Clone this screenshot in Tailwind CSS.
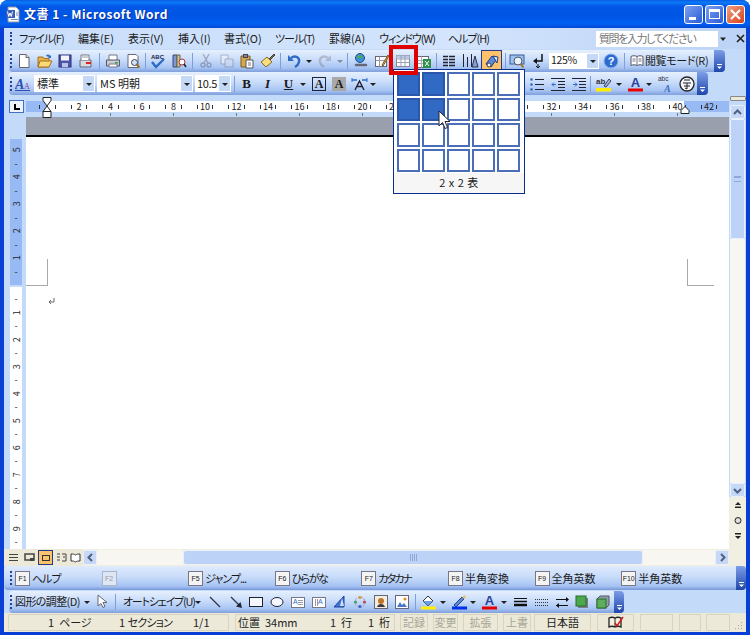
<!DOCTYPE html>
<html lang="ja">
<head>
<meta charset="utf-8">
<script src="https://cdn.jsdelivr.net/npm/@tailwindcss/browser@4"></script>
<title>Word</title>
</head>
<body class="bg-white">
<div class="relative w-[750px] h-[635px] overflow-hidden rounded-t-[8px] flex flex-col bg-[#0a3fd6] font-['Noto_Sans_CJK_JP','Liberation_Sans',sans-serif] [font-feature-settings:'palt'] text-[11px] leading-none text-[#1a1a1a]">

  <!-- title bar -->
  <div class="h-[28px] shrink-0 flex items-center pl-[5px] pr-[5px] bg-[linear-gradient(180deg,#0a5ae6_0%,#0b7bf5_8%,#0358e8_22%,#0054e3_55%,#0160f2_85%,#0348d2_100%)]">
    <svg class="w-[17px] h-[17px] shrink-0" viewBox="0 0 17 17"><path d="M3 1h8l3 3v12H3z" fill="#fff" stroke="#8a93a8"/><rect x="1" y="4" width="9" height="8" fill="#3a5fb8"/><path d="M2.5 5.5l1.2 5 1.3-3.5 1.3 3.5 1.2-5" stroke="#fff" fill="none"/><path d="M11 7h2M11 9h2M6 13.500h7" stroke="#7a88a8"/></svg>
    <span class="ml-[2px] text-white font-bold text-[12px] tracking-[0.5px] whitespace-nowrap [text-shadow:1px_1px_0_#0a2f9a]">文書&nbsp;1&nbsp;-&nbsp;Microsoft&nbsp;Word</span>
    <div class="ml-auto flex gap-[2px]">
      <div class="w-[19px] h-[19px] rounded-[3px] border border-white bg-[linear-gradient(135deg,#7da2f0,#2a5bd8)] flex items-end pl-[4px] pb-[3px]"><div class="w-[7px] h-[3px] bg-white"></div></div>
      <div class="w-[19px] h-[19px] rounded-[3px] border border-white bg-[linear-gradient(135deg,#7da2f0,#2a5bd8)] flex items-center justify-center"><div class="w-[11px] h-[10px] border border-white border-t-[3px]"></div></div>
      <div class="w-[19px] h-[19px] rounded-[3px] border border-white bg-[linear-gradient(135deg,#f0a080,#d8401a)] flex items-center justify-center">
        <svg class="w-[13px] h-[13px]" viewBox="0 0 13 13"><path d="M2 2l9 9M11 2l-9 9" stroke="#fff" stroke-width="2.200"/></svg>
      </div>
    </div>
  </div>

  <div class="flex-1 min-h-0 mx-[4px] mb-[3px] flex flex-col bg-[#c4daf9]">

    <!-- menu bar -->
    <div class="h-[21px] shrink-0 flex items-center pl-[6px] whitespace-nowrap bg-[linear-gradient(90deg,#c9defb,#d3e4fc_60%,#bcd3f7)]">
      <div class="w-[2px] h-[13px] mr-[7px] border-l-2 border-dotted border-[#27419a]"></div>
      <span class="w-[59px] tracking-[-1px]">ファイル(F)</span>
      <span class="w-[50px]">編集(E)</span>
      <span class="w-[50px]">表示(V)</span>
      <span class="w-[46px]">挿入(I)</span>
      <span class="w-[51px]">書式(O)</span>
      <span class="w-[54px] tracking-[-1px]">ツール(T)</span>
      <span class="w-[50px]">罫線(A)</span>
      <span class="w-[69px] tracking-[-1px]">ウィンドウ(W)</span>
      <span class="w-[148px] tracking-[-1px]">ヘルプ(H)</span>
      <div class="w-[122px] h-[16px] bg-white flex items-center pl-[3px] text-[#777] tracking-[-1.400px]">質問を入力してください</div>
      <svg class="ml-[1px] w-[8px] h-[8px]" viewBox="0 0 8 8"><path d="M1 2.500h6L4 6z" fill="#222"/></svg>
      <svg class="ml-[9px] w-[9px] h-[9px]" viewBox="0 0 9 9"><path d="M1 1l7 7M8 1l-7 7" stroke="#222" stroke-width="1.600"/></svg>
    </div>

    <!-- standard toolbar -->
    <div class="h-[23px] shrink-0 flex items-center">
      <div class="relative ml-[5px] w-[716px] h-[22px] rounded-[4px] flex items-center pl-[1px] whitespace-nowrap bg-[linear-gradient(180deg,#e6f0fe,#c8dcfa_45%,#a8c5f3_80%,#7f9fdc)]">
        <div class="w-[2px] h-[14px] mr-[2px] border-l-2 border-dotted border-[#27419a]"></div>
        <!-- new --><svg class="w-[16px] h-[16px] mx-[2px]" viewBox="0 0 16 16"><path d="M3.500 1.500h6.500l3 3v10H3.500z" fill="#fff" stroke="#666"/><path d="M10 1.500v3h3" fill="#ddd" stroke="#666"/></svg>
        <!-- open --><svg class="w-[16px] h-[16px] mx-[2.500px]" viewBox="0 0 16 16"><path d="M1 4h5l1 1.500h5V14H1z" fill="#e8b24a" stroke="#a5701c"/><path d="M3 8h12l-3 6H1z" fill="#fbd87a" stroke="#a5701c"/><path d="M9 3c1-2 3-2 4 0l1-1v3h-3l1-1" fill="#2e6bc8"/></svg>
        <!-- save --><svg class="w-[16px] h-[16px] mx-[2px]" viewBox="0 0 16 16"><rect x="2" y="2" width="12" height="12" fill="#4d55a8" stroke="#2a2f78"/><rect x="4" y="2.500" width="8" height="5" fill="#f4f4fa"/><rect x="5" y="10" width="6" height="4" fill="#bcc2e8"/></svg>
        <!-- perm --><svg class="w-[16px] h-[16px] mx-[2px]" viewBox="0 0 16 16"><path d="M3 7h11v7H3z" fill="#d7d9de" stroke="#667"/><path d="M4 7V2h8v5" fill="#fff" stroke="#778"/><rect x="9" y="9" width="5" height="2" fill="#d22"/><path d="M5 4h6" stroke="#99a"/></svg>
        <div class="w-[1px] h-[16px] ml-[4px] mr-[3px] bg-[#7f9fdc]"></div>
        <!-- print --><svg class="w-[16px] h-[16px] mx-[2px]" viewBox="0 0 16 16"><path d="M4 7V2h8v5" fill="#fff" stroke="#778"/><path d="M1.500 7h13v6h-13z" fill="#c9ccd3" stroke="#556"/><rect x="10" y="9" width="3" height="1.500" fill="#2aa84a"/><path d="M4 11h8v3H4z" fill="#fff" stroke="#778"/></svg>
        <!-- preview --><svg class="w-[16px] h-[16px] mx-[2px]" viewBox="0 0 16 16"><path d="M3 1.500h8l2 2v11H3z" fill="#fff" stroke="#667"/><circle cx="9.500" cy="9.500" r="3" fill="#cfe3fb" stroke="#445"/><path d="M11.500 11.500l3 3" stroke="#a06b20" stroke-width="1.800"/></svg>
        <div class="w-[1px] h-[16px] ml-[2px] mr-[2px] bg-[#7f9fdc]"></div>
        <!-- spell --><svg class="w-[18px] h-[16px] mx-[1px]" viewBox="0 0 18 16"><text x="2" y="6" font-size="6" font-weight="700" fill="#224" font-family="Liberation Sans">ABC</text><path d="M3 9l4 5L15 6" fill="none" stroke="#2e6bc8" stroke-width="2.400"/></svg>
        <!-- research --><svg class="w-[16px] h-[16px] mx-[3px]" viewBox="0 0 16 16"><path d="M2 2h4v12H2z" fill="#7c9ad8" stroke="#446"/><path d="M6 2h3v12H6z" fill="#d9c48c" stroke="#665"/><circle cx="11" cy="9" r="3" fill="#fff" stroke="#a33"/><path d="M13 11l2 3" stroke="#222" stroke-width="1.500"/></svg>
        <div class="w-[1px] h-[16px] mx-[2px] bg-[#7f9fdc]"></div>
        <!-- cut --><svg class="w-[16px] h-[16px] mx-[2.500px] opacity-40" viewBox="0 0 16 16"><path d="M5 1l5 9M11 1L6 10" stroke="#556" stroke-width="1.400"/><circle cx="5" cy="12" r="2" fill="none" stroke="#556" stroke-width="1.400"/><circle cx="11" cy="12" r="2" fill="none" stroke="#556" stroke-width="1.400"/></svg>
        <!-- copy --><svg class="w-[16px] h-[16px] mx-[2.500px] opacity-40" viewBox="0 0 16 16"><path d="M2 2h7v9H2z" fill="#fff" stroke="#667"/><path d="M6 6h8v8H6z" fill="#dde" stroke="#667"/></svg>
        <!-- paste --><svg class="w-[16px] h-[16px] mx-[2px]" viewBox="0 0 16 16"><path d="M2 3h9v11H2z" fill="#d9a64a" stroke="#7a5a20"/><rect x="4.500" y="1.500" width="4" height="3" fill="#889" stroke="#445"/><path d="M7 7h7v8H7z" fill="#fff" stroke="#556"/><path d="M9 10h3M9 12h3" stroke="#778"/></svg>
        <!-- painter --><svg class="w-[16px] h-[16px] mx-[2.500px]" viewBox="0 0 16 16"><path d="M1 9l6-5 5 5-6 5z" fill="#f7dc80" stroke="#8a6a20"/><path d="M9 6l5-5 1 1-5 5" fill="#7a6a5a" stroke="#443"/></svg>
        <div class="w-[1px] h-[16px] ml-[2px] mr-[4px] bg-[#7f9fdc]"></div>
        <!-- undo --><svg class="w-[16px] h-[16px] mx-[2px]" viewBox="0 0 16 16"><path d="M4 5c4-3 9-1 8 4-.500 2-2 4-4 5" fill="none" stroke="#2e6bc8" stroke-width="2.400"/><path d="M1 2v6h6z" fill="#2e6bc8"/></svg>
        <svg class="w-[8px] h-[8px]" viewBox="0 0 8 8"><path d="M1 3h6L4 6z" fill="#222"/></svg>
        <!-- redo --><svg class="w-[16px] h-[16px] ml-[3px] mr-[4px] opacity-35" viewBox="0 0 16 16"><path d="M12 5c-4-3-9-1-8 4 .500 2 2 4 4 5" fill="none" stroke="#778" stroke-width="2.400"/><path d="M15 2v6H9z" fill="#778"/></svg>
        <svg class="w-[8px] h-[8px] opacity-40" viewBox="0 0 8 8"><path d="M1 3h6L4 6z" fill="#222"/></svg>
        <div class="w-[1px] h-[16px] mx-[3px] bg-[#7f9fdc]"></div>
        <!-- link --><svg class="w-[16px] h-[16px] mx-[2px]" viewBox="0 0 16 16"><circle cx="7" cy="5" r="4.500" fill="#3f8fd8" stroke="#26508a"/><path d="M4 4c2-2 3 1 5 0" stroke="#4cae4c" stroke-width="2" fill="none"/><path d="M3 12h5M9 12h4" stroke="#667" stroke-width="2.500" stroke-linecap="round"/></svg>
        <!-- tables & borders --><svg class="w-[16px] h-[16px] mx-[2.500px]" viewBox="0 0 16 16"><rect x="1.500" y="3.500" width="11" height="10" fill="#fff" stroke="#667"/><path d="M5.500 3.500v10M1.500 7.500h11" stroke="#99a"/><path d="M8 12L14 2l1 1-6 10z" fill="#e8b24a" stroke="#7a5a20"/></svg>
        <!-- table --><div class="w-[21px] h-[22px] flex items-center justify-center"><svg class="w-[14px] h-[14px]" viewBox="0 0 14 14"><rect x=".5" y="1.500" width="13" height="11" fill="#fff" stroke="#889"/><rect x=".5" y="1.500" width="13" height="3" fill="#b7c9e6"/><path d="M5 1.500v11M9 1.500v11M.5 5h13M.5 8.500h13" stroke="#99a3b5"/></svg></div>
        <!-- excel --><svg class="w-[16px] h-[16px] mx-[2.500px]" viewBox="0 0 16 16"><rect x="1.500" y="3.500" width="11" height="11" fill="#fff" stroke="#667"/><path d="M1.500 7.500h11M1.500 10.500h11M5.500 3.500v11" stroke="#aab"/><rect x="7" y="6" width="8" height="9" fill="#2e8f4c"/><path d="M9 8l4 5M13 8l-4 5" stroke="#fff"/></svg>
        <div class="w-[1px] h-[16px] mx-[2px] bg-[#7f9fdc]"></div>
        <!-- columns --><svg class="w-[16px] h-[16px] mx-[2px]" viewBox="0 0 16 16"><path d="M2 3.500h12M2 6.500h12M2 9.500h12M2 12.500h12" stroke="#223" stroke-width="1.400"/><path d="M7.500 2v12" stroke="#c8dcfa" stroke-width="1"/></svg>
        <!-- drawing --><svg class="w-[18px] h-[16px] mx-[2px]" viewBox="0 0 18 16"><path d="M2.500 14V1M6.500 14V4M10.500 14V1" stroke="#223" stroke-width="1"/><path d="M14 3l-3 11h6z" fill="#7fa0dc" stroke="#334"/></svg>
        <!-- docmap active --><div class="w-[21px] h-[22px] border border-[#2a3c88] bg-[#fbc26b] flex items-center justify-center"><svg class="w-[16px] h-[16px]" viewBox="0 0 16 16"><path d="M2 11l6-8 4 4-5 7z" fill="#5a8ad8" stroke="#223a80"/><path d="M9 3l5 1-1 6z" fill="#d9e6fb" stroke="#223a80"/><circle cx="5" cy="12" r="2" fill="#f4f4f4" stroke="#444"/></svg></div>
        <div class="w-[1px] h-[16px] ml-[3px] mr-[1px] bg-[#7f9fdc]"></div>
        <!-- magnifier --><svg class="w-[17px] h-[16px] mx-[2px]" viewBox="0 0 17 16"><rect x="1" y="2" width="14" height="9" fill="#9cc2ee" stroke="#3b5c9a"/><circle cx="9" cy="8" r="4" fill="#e8f2fd" stroke="#556"/><path d="M11.500 11l3 3.500" stroke="#a06b20" stroke-width="1.800"/></svg>
        <!-- para --><svg class="w-[16px] h-[16px] mx-[2px]" viewBox="0 0 16 16"><path d="M12 1v7H6" fill="none" stroke="#111" stroke-width="1.500"/><path d="M7 5L3 8l4 3z" fill="#111"/><path d="M8 11v3M6 13l2 2 2-2" stroke="#111" fill="none"/></svg>
        <!-- zoom --><div class="ml-[1px] w-[50px] h-[16px] bg-white flex items-center justify-between pl-[2px] text-[#222]"><span class="text-[10.500px] tracking-[-0.3px]">125%</span><div class="w-[11px] h-[14px] mr-[1px] bg-[#c5d8f6] flex items-center justify-center"><svg class="w-[8px] h-[8px]" viewBox="0 0 8 8"><path d="M1 3h6L4 6z" fill="#222"/></svg></div></div>
        <!-- help --><svg class="w-[16px] h-[16px] ml-[4px] mr-[2px]" viewBox="0 0 16 16"><circle cx="8" cy="8" r="7" fill="#2e6bd0" stroke="#8fb0ea"/><text x="8" y="12" text-anchor="middle" font-size="11" font-weight="700" fill="#fff" font-family="Liberation Sans">?</text></svg>
        <div class="w-[1px] h-[16px] ml-[3px] mr-[5px] bg-[#7f9fdc]"></div>
        <!-- read --><svg class="w-[14px] h-[12px]" viewBox="0 0 14 12"><path d="M1 1.500c2-1 4-1 6 0 2-1 4-1 6 0v9c-2-1-4-1-6 0-2-1-4-1-6 0z" fill="#fff" stroke="#556"/><path d="M7 1.500v9M2.500 4h3M2.500 6h3M8.500 4h3M8.500 6h3" stroke="#778"/></svg>
        <span class="ml-[1px] tracking-[-0.400px]">閲覧モード(R)</span>
        <div class="absolute right-0 top-0 w-[11px] h-[22px] rounded-r-[4px] bg-[linear-gradient(180deg,#7d9de6,#1f47ab)] flex items-end justify-center pb-[2px]"><svg class="w-[7px] h-[7px]" viewBox="0 0 7 7"><path d="M1 1h5v1H1zM1 3.500h5L3.500 6z" fill="#fff"/></svg></div>
      </div>
    </div>

    <!-- formatting toolbar -->
    <div class="h-[23px] shrink-0 flex items-center">
      <div class="relative ml-[5px] w-[699px] h-[23px] rounded-[4px] flex items-center pl-[1px] bg-[linear-gradient(180deg,#e6f0fe,#c8dcfa_45%,#a8c5f3_80%,#7f9fdc)]">
        <div class="w-[2px] h-[14px] mr-[2px] border-l-2 border-dotted border-[#27419a]"></div>
        <svg class="w-[16px] h-[16px] ml-[1px]" viewBox="0 0 16 16"><text x="0" y="13" font-size="14" font-style="italic" font-weight="700" fill="#2b4fb0" font-family="Liberation Serif">A</text><text x="9" y="13" font-size="8" fill="#8a3aa8" font-family="Liberation Serif">A</text><path d="M0 14.500h15" stroke="#2b4fb0"/></svg>
        <div class="ml-[3px] w-[61px] h-[17px] bg-white flex items-center justify-between pl-[3px]"><span>標準</span><div class="w-[11px] h-[15px] mr-[1px] bg-[#c5d8f6] flex items-center justify-center"><svg class="w-[8px] h-[8px]" viewBox="0 0 8 8"><path d="M1 3h6L4 6z" fill="#222"/></svg></div></div>
        <div class="ml-[2px] w-[96px] h-[17px] bg-white flex items-center justify-between pl-[3px]"><span>MS&nbsp;明朝</span><div class="w-[11px] h-[15px] mr-[1px] bg-[#c5d8f6] flex items-center justify-center"><svg class="w-[8px] h-[8px]" viewBox="0 0 8 8"><path d="M1 3h6L4 6z" fill="#222"/></svg></div></div>
        <div class="ml-[2px] w-[36px] h-[17px] bg-white flex items-center justify-between pl-[2px]"><span class="tracking-[-0.3px]">10.5</span><div class="w-[11px] h-[15px] mr-[1px] bg-[#c5d8f6] flex items-center justify-center"><svg class="w-[8px] h-[8px]" viewBox="0 0 8 8"><path d="M1 3h6L4 6z" fill="#222"/></svg></div></div>
        <div class="w-[1px] h-[16px] ml-[3px] mr-[1px] bg-[#7f9fdc]"></div>
        <span class="w-[21px] text-center font-['Liberation_Serif'] font-bold text-[13px]">B</span>
        <span class="w-[21px] text-center font-['Liberation_Serif'] font-bold italic text-[13px]">I</span>
        <span class="w-[21px] text-center font-['Liberation_Serif'] font-bold underline text-[13px]">U</span>
        <svg class="w-[8px] h-[8px] mr-[5px]" viewBox="0 0 8 8"><path d="M1 3h6L4 6z" fill="#222"/></svg>
        <span class="w-[14px] h-[14px] border border-[#223] text-center font-['Liberation_Serif'] font-bold text-[12px] leading-[12px] mr-[6px]">A</span>
        <span class="w-[14px] h-[14px] bg-[#a9a9a9] text-center font-['Liberation_Serif'] font-bold text-[12px] leading-[14px] mr-[5px]">A</span>
        <svg class="w-[17px] h-[15px]" viewBox="0 0 17 15"><path d="M4 14l4.500-9L13 14M6 10.500h5" fill="none" stroke="#223" stroke-width="1.400"/><path d="M1 4h5M11 4h5" stroke="#2e6bc8" stroke-width="1.500"/><path d="M1 2v4M16 2v4" stroke="#2e6bc8"/></svg>
        <svg class="w-[8px] h-[8px] ml-[1px]" viewBox="0 0 8 8"><path d="M1 3h6L4 6z" fill="#222"/></svg>
        <!-- bullets and rest on the right of the grid -->
        <svg class="ml-[152px] w-[16px] h-[16px]" viewBox="0 0 16 16"><path d="M6 3.500h9M6 8.500h9M6 13.500h9" stroke="#223"/><circle cx="2.500" cy="3.500" r="1.300" fill="#2e6bc8"/><circle cx="2.500" cy="8.500" r="1.300" fill="#2e6bc8"/><circle cx="2.500" cy="13.500" r="1.300" fill="#2e6bc8"/></svg>
        <svg class="ml-[5px] w-[16px] h-[16px]" viewBox="0 0 16 16"><path d="M1 2.500h14M8 5.500h7M8 8.500h7M8 11.500h7M1 14.500h14" stroke="#223"/><path d="M6 8.500H2M4 6.500l-2 2 2 2" stroke="#2e6bc8" fill="none"/></svg>
        <svg class="ml-[5px] w-[16px] h-[16px]" viewBox="0 0 16 16"><path d="M1 2.500h14M8 5.500h7M8 8.500h7M8 11.500h7M1 14.500h14" stroke="#223"/><path d="M2 8.500h4M4 6.500l2 2-2 2" stroke="#2e6bc8" fill="none"/></svg>
        <div class="w-[1px] h-[16px] mx-[3px] bg-[#7f9fdc]"></div>
        <svg class="ml-[2px] w-[16px] h-[16px]" viewBox="0 0 16 16"><text x="0" y="8" font-size="8" font-weight="700" fill="#334" font-family="Liberation Sans">ab</text><path d="M8 10l5-7 2 2-5 6z" fill="#9fb3d8" stroke="#445"/><rect x="0" y="12" width="15" height="3.500" fill="#ffee00"/></svg>
        <svg class="ml-[3px] w-[8px] h-[8px]" viewBox="0 0 8 8"><path d="M1 3h6L4 6z" fill="#222"/></svg>
        <svg class="ml-[4.500px] w-[15px] h-[16px]" viewBox="0 0 15 16"><text x="7.500" y="11" text-anchor="middle" font-size="13" font-weight="700" fill="#2b3f9c" font-family="Liberation Sans">A</text><rect x="0" y="12.500" width="15" height="3" fill="#e80000"/></svg>
        <svg class="ml-[2.500px] w-[8px] h-[8px]" viewBox="0 0 8 8"><path d="M1 3h6L4 6z" fill="#222"/></svg>
        <svg class="ml-[4.500px] w-[15px] h-[16px]" viewBox="0 0 15 16"><text x="0" y="5" font-size="6.500" fill="#334" font-family="Liberation Sans">abc</text><text x="6" y="16" font-size="10" font-style="italic" font-weight="700" fill="#3f6fc8" font-family="Liberation Serif">A</text></svg>
        <svg class="ml-[6.500px] w-[16px] h-[16px]" viewBox="0 0 16 16"><circle cx="8" cy="8" r="7" fill="#f3f6fc" stroke="#222" stroke-width="1.300"/><path d="M5 4h6M4 7h8M8 7v6l-2-1M5 10h6" stroke="#222" fill="none"/></svg>
        <div class="absolute right-0 top-0 w-[11px] h-[23px] rounded-r-[4px] bg-[linear-gradient(180deg,#7d9de6,#1f47ab)] flex items-end justify-center pb-[2px]"><svg class="w-[7px] h-[7px]" viewBox="0 0 7 7"><path d="M1 1h5v1H1zM1 3.500h5L3.500 6z" fill="#fff"/></svg></div>
      </div>
    </div>

    <!-- workspace -->
    <div class="flex-1 min-h-0 flex flex-col">
      <div class="h-[454px] shrink-0 flex">
        <!-- left column: tab button + vertical ruler -->
        <div class="w-[22px] shrink-0 flex flex-col items-center pl-[2px]">
          <div class="mt-[5px] w-[15px] h-[13px] bg-[#eef3fc] border border-[#4470c4] flex items-center justify-center"><div class="w-[6px] h-[6px] ml-[1px] border-l-2 border-b-2 border-black"></div></div>
          <div class="mt-[26px] w-[12px] h-[146px] bg-[#97b9f4] pt-[4px] flex flex-col items-center text-[9px] text-[#222]">
            <span class="h-[13.500px] flex items-center -rotate-90">5</span><span class="h-[13.500px] flex items-center">-</span>
            <span class="h-[13.500px] flex items-center -rotate-90">4</span><span class="h-[13.500px] flex items-center">-</span>
            <span class="h-[13.500px] flex items-center -rotate-90">3</span><span class="h-[13.500px] flex items-center">-</span>
            <span class="h-[13.500px] flex items-center -rotate-90">2</span><span class="h-[13.500px] flex items-center">-</span>
            <span class="h-[13.500px] flex items-center -rotate-90">1</span><span class="h-[13.500px] flex items-center">-</span>
          </div>
          <div class="mt-[2px] w-[12px] h-[262px] bg-white pt-[5px] flex flex-col items-center text-[9px] text-[#222]">
            <span class="h-[13.500px] flex items-center">-</span><span class="h-[13.500px] flex items-center -rotate-90">1</span>
            <span class="h-[13.500px] flex items-center">-</span><span class="h-[13.500px] flex items-center -rotate-90">2</span>
            <span class="h-[13.500px] flex items-center">-</span><span class="h-[13.500px] flex items-center -rotate-90">3</span>
            <span class="h-[13.500px] flex items-center">-</span><span class="h-[13.500px] flex items-center -rotate-90">4</span>
            <span class="h-[13.500px] flex items-center">-</span><span class="h-[13.500px] flex items-center -rotate-90">5</span>
            <span class="h-[13.500px] flex items-center">-</span><span class="h-[13.500px] flex items-center -rotate-90">6</span>
            <span class="h-[13.500px] flex items-center">-</span><span class="h-[13.500px] flex items-center -rotate-90">7</span>
            <span class="h-[13.500px] flex items-center">-</span><span class="h-[13.500px] flex items-center -rotate-90">8</span>
            <span class="h-[13.500px] flex items-center">-</span><span class="h-[13.500px] flex items-center -rotate-90">9</span>
            <span class="h-[13.500px] flex items-center">-</span>
          </div>
        </div>

        <!-- center -->
        <div class="w-[703px] shrink-0 flex flex-col relative">
          <!-- ruler -->
          <div class="h-[22px] shrink-0 pt-[6px]">
            <div class="relative h-[11px] flex bg-[linear-gradient(90deg,#97b9f4_0,#97b9f4_21px,#fff_21px,#fff_658px,#97b9f4_658px)]">
              <div class="pl-[5.750px] flex text-[9px] text-[#222]">
                <div class="w-[31.500px] flex items-center justify-between px-[7.500px]"><i class="w-[1px] h-[4px] bg-[#333]"></i><i class="w-[1px] h-[4px] bg-[#333]"></i></div>
                <div class="w-[31.500px] flex items-center justify-between px-[7.500px]"><i class="w-[1px] h-[4px] bg-[#333]"></i><span>2</span><i class="w-[1px] h-[4px] bg-[#333]"></i></div>
                <div class="w-[31.500px] flex items-center justify-between px-[7.500px]"><i class="w-[1px] h-[4px] bg-[#333]"></i><span>4</span><i class="w-[1px] h-[4px] bg-[#333]"></i></div>
                <div class="w-[31.500px] flex items-center justify-between px-[7.500px]"><i class="w-[1px] h-[4px] bg-[#333]"></i><span>6</span><i class="w-[1px] h-[4px] bg-[#333]"></i></div>
                <div class="w-[31.500px] flex items-center justify-between px-[7.500px]"><i class="w-[1px] h-[4px] bg-[#333]"></i><span>8</span><i class="w-[1px] h-[4px] bg-[#333]"></i></div>
                <div class="w-[31.500px] flex items-center justify-between px-[7.500px]"><i class="w-[1px] h-[4px] bg-[#333]"></i><span>10</span><i class="w-[1px] h-[4px] bg-[#333]"></i></div>
                <div class="w-[31.500px] flex items-center justify-between px-[7.500px]"><i class="w-[1px] h-[4px] bg-[#333]"></i><span>12</span><i class="w-[1px] h-[4px] bg-[#333]"></i></div>
                <div class="w-[31.500px] flex items-center justify-between px-[7.500px]"><i class="w-[1px] h-[4px] bg-[#333]"></i><span>14</span><i class="w-[1px] h-[4px] bg-[#333]"></i></div>
                <div class="w-[31.500px] flex items-center justify-between px-[7.500px]"><i class="w-[1px] h-[4px] bg-[#333]"></i><span>16</span><i class="w-[1px] h-[4px] bg-[#333]"></i></div>
                <div class="w-[31.500px] flex items-center justify-between px-[7.500px]"><i class="w-[1px] h-[4px] bg-[#333]"></i><span>18</span><i class="w-[1px] h-[4px] bg-[#333]"></i></div>
                <div class="w-[31.500px] flex items-center justify-between px-[7.500px]"><i class="w-[1px] h-[4px] bg-[#333]"></i><span>20</span><i class="w-[1px] h-[4px] bg-[#333]"></i></div>
                <div class="w-[31.500px] flex items-center justify-between px-[7.500px]"><i class="w-[1px] h-[4px] bg-[#333]"></i><span>22</span><i class="w-[1px] h-[4px] bg-[#333]"></i></div>
                <div class="w-[31.500px] flex items-center justify-between px-[7.500px]"><i class="w-[1px] h-[4px] bg-[#333]"></i><span>24</span><i class="w-[1px] h-[4px] bg-[#333]"></i></div>
                <div class="w-[31.500px] flex items-center justify-between px-[7.500px]"><i class="w-[1px] h-[4px] bg-[#333]"></i><span>26</span><i class="w-[1px] h-[4px] bg-[#333]"></i></div>
                <div class="w-[31.500px] flex items-center justify-between px-[7.500px]"><i class="w-[1px] h-[4px] bg-[#333]"></i><span>28</span><i class="w-[1px] h-[4px] bg-[#333]"></i></div>
                <div class="w-[31.500px] flex items-center justify-between px-[7.500px]"><i class="w-[1px] h-[4px] bg-[#333]"></i><span>30</span><i class="w-[1px] h-[4px] bg-[#333]"></i></div>
                <div class="w-[31.500px] flex items-center justify-between px-[7.500px]"><i class="w-[1px] h-[4px] bg-[#333]"></i><span>32</span><i class="w-[1px] h-[4px] bg-[#333]"></i></div>
                <div class="w-[31.500px] flex items-center justify-between px-[7.500px]"><i class="w-[1px] h-[4px] bg-[#333]"></i><span>34</span><i class="w-[1px] h-[4px] bg-[#333]"></i></div>
                <div class="w-[31.500px] flex items-center justify-between px-[7.500px]"><i class="w-[1px] h-[4px] bg-[#333]"></i><span>36</span><i class="w-[1px] h-[4px] bg-[#333]"></i></div>
                <div class="w-[31.500px] flex items-center justify-between px-[7.500px]"><i class="w-[1px] h-[4px] bg-[#333]"></i><span>38</span><i class="w-[1px] h-[4px] bg-[#333]"></i></div>
                <div class="w-[31.500px] flex items-center justify-between px-[7.500px]"><i class="w-[1px] h-[4px] bg-[#333]"></i><span>40</span><i class="w-[1px] h-[4px] bg-[#333]"></i></div>
                <div class="w-[31.500px] flex items-center justify-between px-[7.500px]"><i class="w-[1px] h-[4px] bg-[#333]"></i><span>42</span><i class="w-[1px] h-[4px] bg-[#333]"></i></div>
              </div>
            </div>
            <div class="ml-[21px] h-[3px] mt-[1px] bg-[repeating-linear-gradient(90deg,#777_0,#777_1px,transparent_1px,transparent_63px)]"></div>
            <!-- indent markers -->
            <svg class="absolute left-[16px] top-[2px] w-[10px] h-[21px]" viewBox="0 0 10 21"><path d="M1 .5h8v3L5 9l4 5.500v6H1v-6L5 9 1 3.500z" fill="#fff" stroke="#222"/><path d="M1 14.500h8" stroke="#222"/></svg>
            <svg class="absolute left-[654px] top-[11px] w-[10px] h-[8px]" viewBox="0 0 10 8"><path d="M5 .5l4 4v3H1v-3z" fill="#fff" stroke="#222"/></svg>
          </div>
          <div class="h-[20px] shrink-0 bg-[#9a9fae] border-b-2 border-black"></div>
          <div class="flex-1 bg-white"></div>

          <!-- margin crop marks -->
          <div class="absolute left-0 top-[164px] w-[22px] h-[27px] border-r border-b border-[#a9a9a9]"></div>
          <div class="absolute left-[661px] top-[164px] w-[27px] h-[27px] border-l border-b border-[#a9a9a9]"></div>
          <svg class="absolute left-[21px] top-[202px] w-[9px] h-[9px]" viewBox="0 0 9 9"><path d="M7 1v4H2M4 3L2 5l2 2" fill="none" stroke="#666"/></svg>
        </div>

        <!-- vertical scrollbar column -->
        <div class="w-[17px] shrink-0 flex flex-col items-center">
          <div class="mt-[1px] w-[16px] h-[5px] bg-[#ece9d8] border border-[#888] rounded-[1px]"></div>
          <div class="mt-[4px] w-[15px] h-[14px] rounded-[2px] border border-[#e8f0fc] bg-[#c6d8f6] flex items-center justify-center"><svg class="w-[9px] h-[7px]" viewBox="0 0 9 7"><path d="M1 5l3.500-3.500L8 5" fill="none" stroke="#4d6185" stroke-width="2"/></svg></div>
          <div class="w-[15px] h-[120px] rounded-[2px] border border-[#eaf1fd] bg-[#bdd2f7] flex items-center justify-center"><div class="w-[7px] h-[6px] border-y border-[#8fa9dd] bg-[linear-gradient(180deg,#8fa9dd_1px,transparent_1px)]"></div></div>
          <div class="w-[15px] flex-1 bg-[#f7f6f0]"></div>
          <div class="w-[15px] h-[14px] rounded-[2px] border border-[#e8f0fc] bg-[#c6d8f6] flex items-center justify-center"><svg class="w-[9px] h-[7px]" viewBox="0 0 9 7"><path d="M1 2l3.500 3.500L8 2" fill="none" stroke="#4d6185" stroke-width="2"/></svg></div>
          <div class="w-[17px] h-[52px] bg-[#f1efe2] pt-[4px] flex flex-col items-center gap-[6px]">
            <svg class="w-[8px] h-[9px]" viewBox="0 0 8 9"><path d="M4 1L1 4h6zM1 5.500h6v1.500H1z" fill="#222"/></svg>
            <svg class="w-[8px] h-[9px]" viewBox="0 0 8 9"><circle cx="4" cy="4.500" r="3" fill="#ddd" stroke="#222"/></svg>
            <svg class="w-[8px] h-[9px]" viewBox="0 0 8 9"><path d="M1 2h6v1.500H1zM1 5h6L4 8z" fill="#222"/></svg>
          </div>
        </div>
      </div>

      <!-- horizontal scrollbar row -->
      <div class="h-[17px] shrink-0 flex items-center bg-[#f1efe2]">
        <div class="w-[79px] h-[17px] pl-[4px] flex items-center gap-[1px] bg-[#ece9d8]">
          <svg class="w-[11px] h-[9px]" viewBox="0 0 11 9"><path d="M1 1.500h9M1 4.500h9M1 7.500h9" stroke="#444" stroke-width="1.200"/></svg>
          <svg class="ml-[4px] w-[11px] h-[9px]" viewBox="0 0 11 9"><rect x="1" y="1" width="9" height="6" fill="none" stroke="#444" stroke-width="1.500"/><rect x="6" y="5" width="4" height="3" fill="#444"/></svg>
          <div class="ml-[2px] w-[15px] h-[15px] border border-[#223a8a] bg-[#fbc26b] flex items-center justify-center"><div class="w-[8px] h-[6px] border border-[#333]"></div></div>
          <svg class="ml-[2px] w-[11px] h-[9px]" viewBox="0 0 11 9"><path d="M1 1h3M1 4h3M1 7h3M6 1h4v7H6M8 3v2" fill="none" stroke="#444"/></svg>
          <svg class="ml-[2px] w-[11px] h-[10px]" viewBox="0 0 11 10"><path d="M1 1c2 0 3 0 4.500 1C7 1 8 1 10 1v7c-2 0-3 0-4.500 1C4 8 3 8 1 8z" fill="#fff" stroke="#333"/></svg>
        </div>
        <div class="w-[14px] h-[15px] rounded-[2px] border border-[#e8f0fc] bg-[#c6d8f6] flex items-center justify-center"><svg class="w-[7px] h-[9px]" viewBox="0 0 7 9"><path d="M5 1L1.500 4.500 5 8" fill="none" stroke="#4d6185" stroke-width="2"/></svg></div>
        <div class="w-[86px] h-[15px] bg-[#f7f6f0]"></div>
        <div class="w-[460px] h-[15px] rounded-[3px] border border-[#eaf1fd] bg-[#bdd2f7] flex items-center justify-center"><div class="w-[7px] h-[7px] bg-[repeating-linear-gradient(90deg,#8fa9dd_0,#8fa9dd_1px,transparent_1px,transparent_2px)]"></div></div>
        <div class="w-[72px] h-[15px] bg-[#f7f6f0]"></div>
        <div class="w-[14px] h-[15px] rounded-[2px] border border-[#e8f0fc] bg-[#c6d8f6] flex items-center justify-center"><svg class="w-[7px] h-[9px]" viewBox="0 0 7 9"><path d="M2 1l3.500 3.500L2 8" fill="none" stroke="#4d6185" stroke-width="2"/></svg></div>
      </div>
    </div>

    <!-- function key bar -->
    <div class="relative h-[24px] shrink-0 flex items-center pl-[6px] whitespace-nowrap rounded-[4px] bg-[linear-gradient(180deg,#dfeafd,#c5daf9_50%,#a3c1f2_85%,#7897d8)]">
      <div class="w-[2px] h-[14px] mr-[3px] border-l-2 border-dotted border-[#27419a]"></div>
      <div class="w-[86.600px] flex items-center gap-[2px]"><span class="w-[15px] h-[15px] bg-[#f4f4f4] border border-[#778] text-[7px] flex items-center justify-center font-['Liberation_Sans']">F1</span><span class="tracking-[-1px]">ヘルプ</span></div>
      <div class="w-[86.600px] flex items-center gap-[2px]"><span class="w-[15px] h-[15px] bg-[#dfe6f4] border border-[#aab4cc] text-[#99a] text-[7px] flex items-center justify-center font-['Liberation_Sans']">F2</span></div>
      <div class="w-[86.600px] flex items-center gap-[2px]"><span class="w-[15px] h-[15px] bg-[#f4f4f4] border border-[#778] text-[7px] flex items-center justify-center font-['Liberation_Sans']">F5</span><span class="tracking-[-1px]">ジャンプ...</span></div>
      <div class="w-[86.600px] flex items-center gap-[2px]"><span class="w-[15px] h-[15px] bg-[#f4f4f4] border border-[#778] text-[7px] flex items-center justify-center font-['Liberation_Sans']">F6</span><span class="tracking-[-1.500px]">ひらがな</span></div>
      <div class="w-[86.600px] flex items-center gap-[2px]"><span class="w-[15px] h-[15px] bg-[#f4f4f4] border border-[#778] text-[7px] flex items-center justify-center font-['Liberation_Sans']">F7</span><span class="tracking-[-2px]">カタカナ</span></div>
      <div class="w-[86.600px] flex items-center gap-[2px]"><span class="w-[15px] h-[15px] bg-[#f4f4f4] border border-[#778] text-[7px] flex items-center justify-center font-['Liberation_Sans']">F8</span><span>半角変換</span></div>
      <div class="w-[86.600px] flex items-center gap-[2px]"><span class="w-[15px] h-[15px] bg-[#f4f4f4] border border-[#778] text-[7px] flex items-center justify-center font-['Liberation_Sans']">F9</span><span>全角英数</span></div>
      <div class="w-[86.600px] flex items-center gap-[2px]"><span class="w-[15px] h-[15px] bg-[#f4f4f4] border border-[#778] text-[7px] flex items-center justify-center font-['Liberation_Sans']">F10</span><span>半角英数</span></div>
      <div class="absolute right-0 top-0 w-[10px] h-[24px] rounded-r-[4px] bg-[linear-gradient(180deg,#7d9de6,#1f47ab)] flex items-end justify-center pb-[2px]"><svg class="w-[7px] h-[7px]" viewBox="0 0 7 7"><path d="M1 1h5v1H1zM1 3.500h5L3.500 6z" fill="#fff"/></svg></div>
    </div>

    <!-- drawing toolbar -->
    <div class="h-[23px] shrink-0 flex items-center">
      <div class="relative ml-[5px] w-[615px] h-[22px] rounded-[4px] flex items-center pl-[1px] whitespace-nowrap bg-[linear-gradient(180deg,#e6f0fe,#c8dcfa_45%,#a8c5f3_80%,#7f9fdc)]">
        <div class="w-[2px] h-[14px] mr-[3px] border-l-2 border-dotted border-[#27419a]"></div>
        <span class="w-[65px] tracking-[-0.600px]">図形の調整(D)</span>
        <svg class="ml-[3px] w-[8px] h-[8px]" viewBox="0 0 8 8"><path d="M1 3h6L4 6z" fill="#222"/></svg>
        <svg class="ml-[5px] w-[12px] h-[15px]" viewBox="0 0 12 15"><path d="M2 1v11l3-2.500 2 4 2-1-2-4h4z" fill="#fff" stroke="#667"/></svg>
        <div class="w-[1px] h-[16px] mx-[7px] bg-[#7f9fdc]"></div>
        <span class="w-[68px] tracking-[-1.200px]">オートシェイプ(U)</span>
        <svg class="ml-[3px] w-[8px] h-[8px]" viewBox="0 0 8 8"><path d="M1 3h6L4 6z" fill="#222"/></svg>
        <svg class="ml-[6px] w-[14px] h-[14px]" viewBox="0 0 14 14"><path d="M2 2l10 10" stroke="#334" stroke-width="1.200"/></svg>
        <svg class="ml-[7px] w-[14px] h-[14px]" viewBox="0 0 14 14"><path d="M2 2l8 8" stroke="#334" stroke-width="1.200"/><path d="M13 13l-6-1.500 4.500-4.500z" fill="#223"/></svg>
        <svg class="ml-[6px] w-[14px] h-[14px]" viewBox="0 0 14 14"><rect x=".5" y="2.500" width="13" height="9" fill="#f4f7fd" stroke="#223"/></svg>
        <svg class="ml-[7px] w-[14px] h-[14px]" viewBox="0 0 14 14"><ellipse cx="7" cy="7" rx="6" ry="4.500" fill="#f4f7fd" stroke="#223"/></svg>
        <svg class="ml-[7px] w-[14px] h-[14px]" viewBox="0 0 14 14"><rect x=".5" y="2.500" width="13" height="10" fill="#fff" stroke="#778"/><text x="2" y="9" font-size="7" fill="#2e6bc8" font-family="Liberation Sans">A</text><path d="M7 5.500h5M7 7.500h5M7 9.500h5" stroke="#99a"/></svg>
        <svg class="ml-[7px] w-[14px] h-[14px]" viewBox="0 0 14 14"><rect x=".5" y="2.500" width="13" height="10" fill="#fff" stroke="#778"/><text x="6" y="9" font-size="7" fill="#2e6bc8" font-family="Liberation Sans">A</text><path d="M3.500 4v7M5.500 4v7" stroke="#99a"/></svg>
        <svg class="ml-[7px] w-[14px] h-[14px]" viewBox="0 0 14 14"><path d="M11 1L1 12h10z" fill="#3f74d4" stroke="#1f3f9a"/><path d="M9 3l-2 8h4z" fill="#cfe0fa"/></svg>
        <svg class="ml-[6px] w-[14px] h-[14px]" viewBox="0 0 14 14"><circle cx="7" cy="2.500" r="1.600" fill="#e8a020"/><circle cx="11.500" cy="7" r="1.600" fill="#c83a3a"/><circle cx="7" cy="11.500" r="1.600" fill="#3a5ac8"/><circle cx="2.500" cy="7" r="1.600" fill="#3aa84a"/><circle cx="7" cy="7" r="5" fill="none" stroke="#889" stroke-dasharray="1.500 1.500"/></svg>
        <svg class="ml-[7px] w-[14px] h-[14px]" viewBox="0 0 14 14"><rect x=".5" y=".5" width="13" height="13" fill="#f3ede0" stroke="#667"/><circle cx="7" cy="6" r="3" fill="#c0742a"/><path d="M3 12c1-4 7-4 8 0" fill="#3a3a3a"/></svg>
        <svg class="ml-[7px] w-[14px] h-[14px]" viewBox="0 0 14 14"><rect x=".5" y=".5" width="13" height="13" fill="#fff" stroke="#667"/><path d="M2 12l3-5 2 3 2-2 3 4z" fill="#4a78c8"/><circle cx="10" cy="4" r="1.600" fill="#e88a2a"/></svg>
        <div class="w-[1px] h-[16px] ml-[6px] mr-[5px] bg-[#7f9fdc]"></div>
        <svg class="w-[15px] h-[16px]" viewBox="0 0 15 16"><path d="M2 7l5-5 5 5-5 5z" fill="#fff" stroke="#333"/><path d="M2 7h10l-5 5z" fill="#6c9ee0"/><rect x="0" y="12.500" width="15" height="3" fill="#ffee00"/></svg>
        <svg class="ml-[3px] w-[8px] h-[8px]" viewBox="0 0 8 8"><path d="M1 3h6L4 6z" fill="#222"/></svg>
        <svg class="ml-[4.500px] w-[15px] h-[16px]" viewBox="0 0 15 16"><path d="M2 11l8-8 2 2-8 8z" fill="#5c8ad8" stroke="#26418a"/><path d="M10 3l3-2 1 2-2 2z" fill="#e8c070"/><rect x="0" y="12.500" width="15" height="3" fill="#0030e8"/></svg>
        <svg class="ml-[2.500px] w-[8px] h-[8px]" viewBox="0 0 8 8"><path d="M1 3h6L4 6z" fill="#222"/></svg>
        <svg class="ml-[4.500px] w-[15px] h-[16px]" viewBox="0 0 15 16"><text x="7.500" y="11" text-anchor="middle" font-size="13" font-weight="700" fill="#2b3f9c" font-family="Liberation Sans">A</text><rect x="0" y="12.500" width="15" height="3" fill="#e80000"/></svg>
        <svg class="ml-[3.500px] w-[8px] h-[8px]" viewBox="0 0 8 8"><path d="M1 3h6L4 6z" fill="#222"/></svg>
        <svg class="ml-[4.500px] w-[15px] h-[14px]" viewBox="0 0 15 14"><path d="M1 3.500h13" stroke="#111"/><path d="M1 6.500h13" stroke="#111" stroke-width="1.500"/><path d="M1 10h13" stroke="#111" stroke-width="2.500"/></svg>
        <svg class="ml-[6px] w-[15px] h-[14px]" viewBox="0 0 15 14"><path d="M1 4.500h13M1 7.500h13M1 10.500h13" stroke="#333" stroke-dasharray="1 1"/></svg>
        <svg class="ml-[6px] w-[15px] h-[14px]" viewBox="0 0 15 14"><path d="M1 4.500h12M1 10.500h12" stroke="#111"/><path d="M14 4.500l-3-2.500v5zM1 10.500l3-2.500v5z" fill="#111"/></svg>
        <svg class="ml-[5.500px] w-[14px] h-[14px]" viewBox="0 0 14 14"><rect x="3" y="3" width="10" height="10" fill="#7a7f8a"/><rect x="1" y="1" width="10" height="10" fill="#4ca84c" stroke="#2a6a2a"/></svg>
        <svg class="ml-[7px] w-[14px] h-[14px]" viewBox="0 0 14 14"><path d="M1 4l3-3h9v9l-3 3H1z" fill="#8fa0a8" stroke="#556"/><rect x="1" y="4" width="9" height="9" fill="#5cb05c" stroke="#2a6a2a"/></svg>
        <div class="absolute right-0 top-0 w-[10px] h-[22px] rounded-r-[4px] bg-[linear-gradient(180deg,#7d9de6,#1f47ab)] flex items-end justify-center pb-[2px]"><svg class="w-[7px] h-[7px]" viewBox="0 0 7 7"><path d="M1 1h5v1H1zM1 3.500h5L3.500 6z" fill="#fff"/></svg></div>
      </div>
    </div>

    <!-- status bar -->
    <div class="h-[19px] shrink-0 flex items-center bg-[#ece9d8] text-[#222] pl-[4px] whitespace-nowrap">
      <div class="w-[221px] h-[17px] border border-[#d8d4c0] flex items-center">
        <span class="pl-[39px] w-[110px]">1&nbsp;&nbsp;ページ</span><span class="w-[74px] tracking-[-0.800px]">1&nbsp;&nbsp;セクション</span><span>1/1</span>
      </div>
      <div class="ml-[6px] w-[160px] h-[17px] border border-[#d8d4c0] flex items-center pl-[2px]">
        <span class="w-[92px]">位置&nbsp;&nbsp;34mm</span><span class="w-[38px]">1&nbsp;&nbsp;行</span><span>1&nbsp;&nbsp;桁</span>
      </div>
      <div class="ml-[5px] w-[28px] h-[17px] border border-[#d8d4c0] flex items-center justify-center text-[#a9a797]">記録</div>
      <div class="ml-[5px] w-[25px] h-[17px] border border-[#d8d4c0] flex items-center justify-center text-[#a9a797]">変更</div>
      <div class="ml-[5px] w-[35px] h-[17px] border border-[#d8d4c0] flex items-center justify-center text-[#a9a797]">拡張</div>
      <div class="ml-[5px] w-[28px] h-[17px] border border-[#d8d4c0] flex items-center justify-center text-[#a9a797]">上書</div>
      <div class="ml-[3px] w-[57px] h-[17px] border border-[#d8d4c0] flex items-center justify-center">日本語</div>
      <div class="ml-[6px] w-[37px] h-[17px] border border-[#d8d4c0] flex items-center justify-center"><svg class="w-[18px] h-[15px]" viewBox="0 0 18 15"><path d="M2 3c2-1 4-1 6 0 2-1 4-1 6 0v9c-2-1-4-1-6 0-2-1-4-1-6 0z" fill="#f4f1e0" stroke="#222" stroke-width="1.300"/><path d="M8 3v9" stroke="#222"/><path d="M8 8l2 3 6-9" fill="none" stroke="#d01818" stroke-width="1.500"/></svg></div>
      <div class="ml-[6px] w-[33px] h-[17px] border border-[#d8d4c0]"></div>
      <div class="ml-[6px] w-[22px] h-[17px] border border-[#d8d4c0]"></div>
      <div class="ml-[5px] w-[24px] h-[17px] border border-[#d8d4c0]"></div>
      <svg class="ml-[3px] w-[10px] h-[10px] self-end mb-[1px]" viewBox="0 0 10 10"><path d="M8 1h1v1H8zM5 4h1v1H5zM8 4h1v1H8zM2 7h1v1H2zM5 7h1v1H5zM8 7h1v1H8z" fill="#a9a58e"/></svg>
    </div>
  </div>

  <!-- table dropdown -->
  <div class="absolute left-[393px] top-[69px] w-[132px] h-[125px] bg-white border border-[#0a2f8a] flex flex-col">
    <div class="pl-[3px] pt-[2px] grid grid-cols-[repeat(5,23px)] gap-x-[2px] gap-y-[2px] auto-rows-[23.500px]">
      <div class="bg-[#316ac5] border-2 border-[#2a56ac]"></div><div class="bg-[#316ac5] border-2 border-[#2a56ac]"></div><div class="bg-white border-2 border-[#4a6fb8]"></div><div class="bg-white border-2 border-[#4a6fb8]"></div><div class="bg-white border-2 border-[#4a6fb8]"></div>
      <div class="bg-[#316ac5] border-2 border-[#2a56ac]"></div><div class="bg-[#316ac5] border-2 border-[#2a56ac]"></div><div class="bg-white border-2 border-[#4a6fb8]"></div><div class="bg-white border-2 border-[#4a6fb8]"></div><div class="bg-white border-2 border-[#4a6fb8]"></div>
      <div class="bg-white border-2 border-[#4a6fb8]"></div><div class="bg-white border-2 border-[#4a6fb8]"></div><div class="bg-white border-2 border-[#4a6fb8]"></div><div class="bg-white border-2 border-[#4a6fb8]"></div><div class="bg-white border-2 border-[#4a6fb8]"></div>
      <div class="bg-white border-2 border-[#4a6fb8]"></div><div class="bg-white border-2 border-[#4a6fb8]"></div><div class="bg-white border-2 border-[#4a6fb8]"></div><div class="bg-white border-2 border-[#4a6fb8]"></div><div class="bg-white border-2 border-[#4a6fb8]"></div>
    </div>
    <div class="flex-1 mt-[1px] pb-[2px] bg-[#f6f6f6] flex items-center justify-center text-[11px] tracking-[0.5px]">2&nbsp;x&nbsp;2&nbsp;表</div>
  </div>
  <!-- red highlight -->
  <div class="absolute left-[389px] top-[45px] w-[29px] h-[30px] border-[4px] border-[#e00000]"></div>
  <!-- cursor -->
  <svg class="absolute left-[438px] top-[110px] w-[12px] h-[20px]" viewBox="0 0 12 20"><path d="M1 1v15l3.500-3.500 2.500 6 2.500-1-2.500-6h5z" fill="#fff" stroke="#222"/></svg>
</div>
</body>
</html>
